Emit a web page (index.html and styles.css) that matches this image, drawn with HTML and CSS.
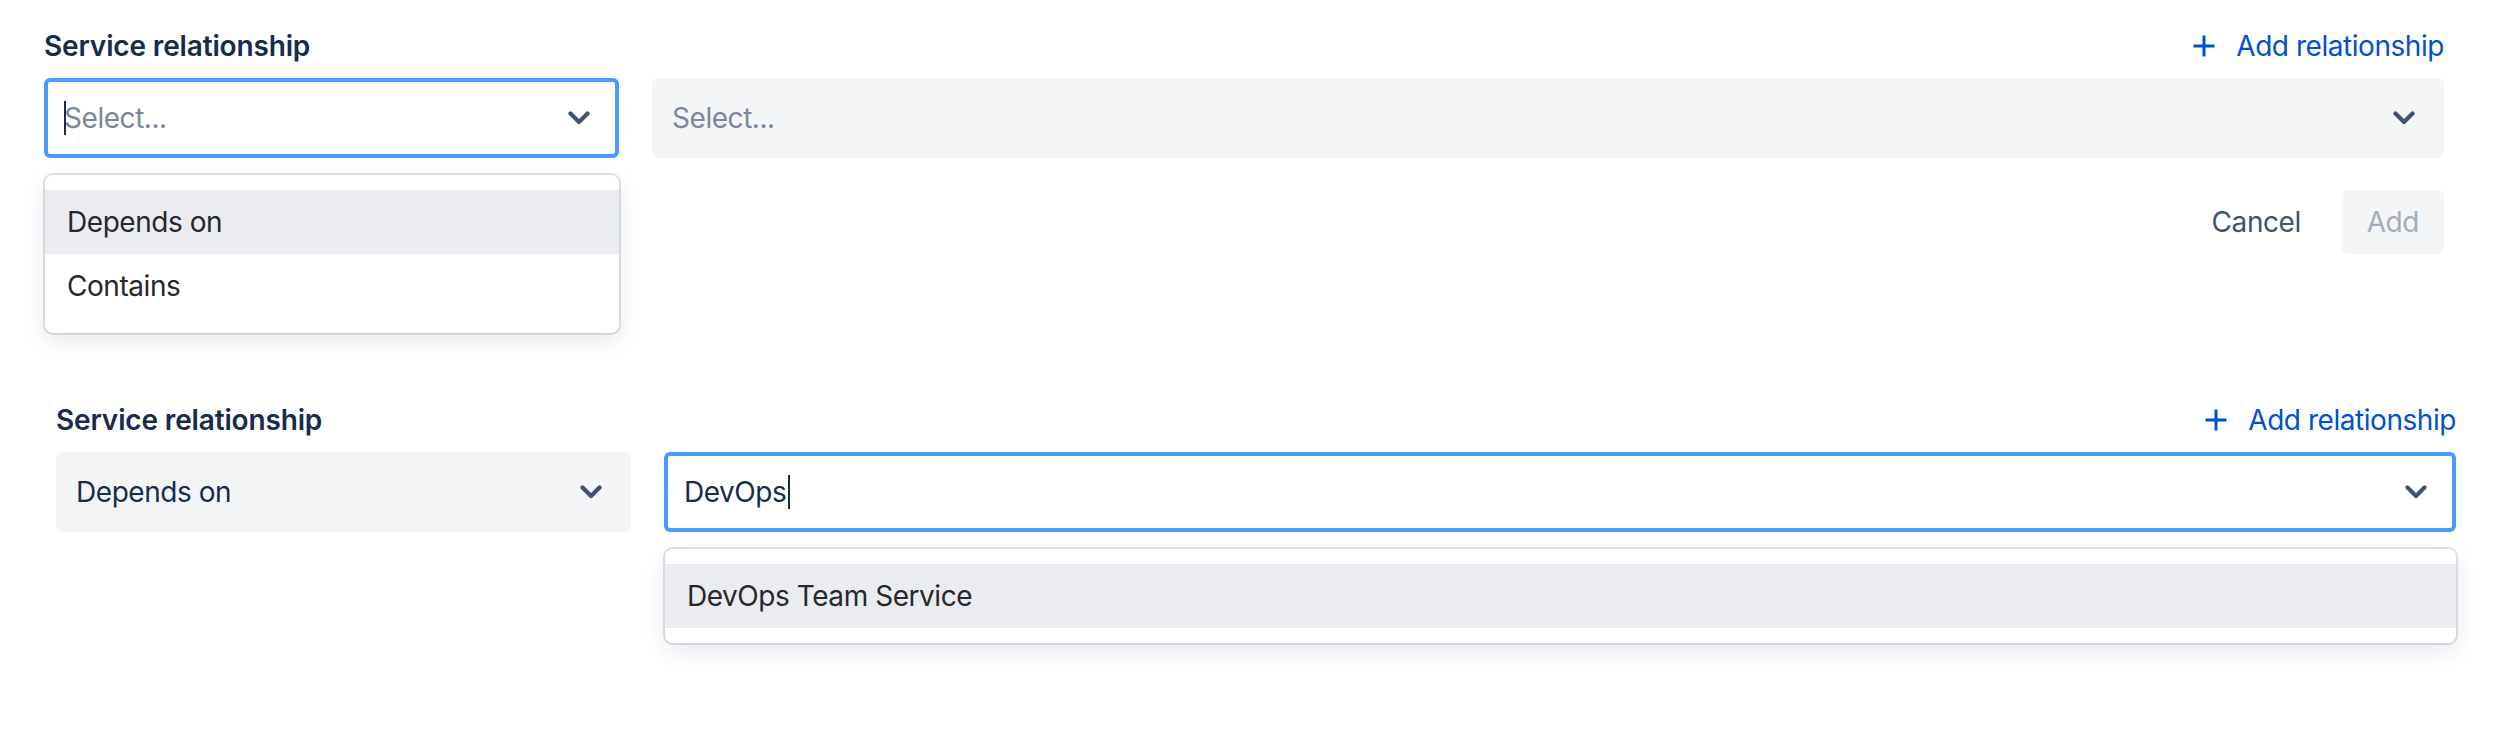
FILE: index.html
```html
<!DOCTYPE html>
<html lang="en">
<head>
<meta charset="utf-8">
<title>Service relationship</title>
<link rel="stylesheet" href="styles.css">
</head>
<body>
<main class="page">
  <section class="rel rel-first">
    <div class="rel-head">
      <span class="rel-label">Service relationship</span>
      <button class="add-link" type="button">
        <svg class="plus" viewBox="0 0 24 24" width="24" height="24" aria-hidden="true"><path d="M12 1.5v21M1.5 12h21" stroke="currentColor" stroke-width="3" fill="none"/></svg>
        <span>Add relationship</span>
      </button>
    </div>
    <div class="rel-fields">
      <div class="select is-focused">
        <div class="select-value">
          <span class="caret caret-start"></span>
          <span class="placeholder">Select...</span>
        </div>
        <svg class="chevron" viewBox="0 0 22 14" width="22" height="14" aria-hidden="true"><polyline points="2.5,2.5 11,11 19.5,2.5" fill="none" stroke="currentColor" stroke-width="4.2" stroke-linecap="round" stroke-linejoin="round"/></svg>
        <ul class="menu">
          <li class="menu-item is-active">Depends on</li>
          <li class="menu-item">Contains</li>
        </ul>
      </div>
      <div class="select">
        <div class="select-value"><span class="placeholder">Select...</span></div>
        <svg class="chevron" viewBox="0 0 22 14" width="22" height="14" aria-hidden="true"><polyline points="2.5,2.5 11,11 19.5,2.5" fill="none" stroke="currentColor" stroke-width="4.2" stroke-linecap="round" stroke-linejoin="round"/></svg>
      </div>
    </div>
    <div class="rel-actions">
      <button class="btn btn-subtle" type="button">Cancel</button>
      <button class="btn btn-disabled" type="button" disabled>Add</button>
    </div>
  </section>

  <section class="rel rel-second">
    <div class="rel-head">
      <span class="rel-label">Service relationship</span>
      <button class="add-link" type="button">
        <svg class="plus" viewBox="0 0 24 24" width="24" height="24" aria-hidden="true"><path d="M12 1.5v21M1.5 12h21" stroke="currentColor" stroke-width="3" fill="none"/></svg>
        <span>Add relationship</span>
      </button>
    </div>
    <div class="rel-fields">
      <div class="select">
        <div class="select-value"><span class="value">Depends on</span></div>
        <svg class="chevron" viewBox="0 0 22 14" width="22" height="14" aria-hidden="true"><polyline points="2.5,2.5 11,11 19.5,2.5" fill="none" stroke="currentColor" stroke-width="4.2" stroke-linecap="round" stroke-linejoin="round"/></svg>
      </div>
      <div class="select is-focused">
        <div class="select-value">
          <span class="typed">DevOps</span><span class="caret caret-inline"></span>
        </div>
        <svg class="chevron" viewBox="0 0 22 14" width="22" height="14" aria-hidden="true"><polyline points="2.5,2.5 11,11 19.5,2.5" fill="none" stroke="currentColor" stroke-width="4.2" stroke-linecap="round" stroke-linejoin="round"/></svg>
        <ul class="menu">
          <li class="menu-item is-active">DevOps Team Service</li>
        </ul>
      </div>
    </div>
    <div class="rel-actions">
      <button class="btn btn-subtle" type="button">Cancel</button>
      <button class="btn btn-disabled" type="button" disabled>Add</button>
    </div>
  </section>
</main>
</body>
</html>
```
FILE: styles.css
```css
* { box-sizing: border-box; }

html, body {
  margin: 0;
  padding: 0;
  background: #ffffff;
}

body {
  min-height: 735px;
  font-family: Inter, "Noto Sans", "Liberation Sans", sans-serif;
  font-size: 28px;
  letter-spacing: -0.45px;
  color: #172b4d;
}

.page {
  display: flex;
  flex-direction: column;
  padding-bottom: 100px;
}

.rel {
  width: 2400px;
  display: flex;
  flex-direction: column;
}

.rel-first {
  margin-left: 44px;
  padding-top: 26px;
}

.rel-second {
  margin-left: 56px;
  margin-top: 146px;
}

.rel-head {
  height: 40px;
  display: flex;
  align-items: center;
  justify-content: space-between;
  margin-bottom: 12px;
}

.rel-label {
  font-weight: 600;
  letter-spacing: -0.15px;
  line-height: 40px;
  color: #172b4d;
}

.add-link {
  display: flex;
  align-items: center;
  gap: 20px;
  border: 0;
  background: none;
  padding: 0;
  font: inherit;
  letter-spacing: inherit;
  line-height: 40px;
  color: #0052cc;
  cursor: pointer;
}

.plus {
  display: block;
  width: 24px;
  height: 24px;
}

.rel-fields {
  display: grid;
  grid-template-columns: 575px 1fr;
  column-gap: 33px;
}

.select {
  position: relative;
  height: 80px;
  display: flex;
  align-items: center;
  padding: 0 25px 0 16px;
  background: #f4f5f7;
  border: 4px solid #f4f5f7;
  border-radius: 6px;
}

.select.is-focused {
  background: #ffffff;
  border-color: #4c9aff;
}

.select-value {
  position: relative;
  flex: 1;
  display: flex;
  align-items: center;
  line-height: 40px;
}

.placeholder {
  color: #7a869a;
}

.value, .typed {
  color: #172b4d;
}

.caret {
  display: inline-block;
  width: 2px;
  height: 34px;
  background: #172b4d;
}

.caret-start {
  position: absolute;
  left: 0;
  top: 3px;
}

.caret-inline {
  margin-left: 2px;
}

.chevron {
  display: block;
  flex: none;
  width: 22px;
  height: 14px;
  color: #42526e;
}

.menu {
  position: absolute;
  z-index: 2;
  left: -3px;
  right: -4px;
  top: calc(100% + 21px);
  margin: 0;
  padding: 15px 0;
  list-style: none;
  background: #ffffff;
  border-radius: 8px;
  box-shadow: 0 0 0 2px rgba(9, 30, 66, 0.13), 0 8px 22px rgba(9, 30, 66, 0.1);
}

.menu-item {
  height: 64px;
  display: flex;
  align-items: center;
  padding: 0 22px;
  color: #26282b;
}

.menu-item.is-active {
  background: #ebecf0;
}

.rel-actions {
  margin-top: 32px;
  display: flex;
  justify-content: flex-end;
  gap: 16px;
}

.btn {
  height: 64px;
  padding: 0 25px;
  border: 0;
  border-radius: 6px;
  font: inherit;
  letter-spacing: inherit;
  line-height: 64px;
  background: none;
}

.btn-subtle {
  color: #42526e;
}

.btn-disabled {
  background: #f4f5f7;
  color: #a5adba;
}
```
